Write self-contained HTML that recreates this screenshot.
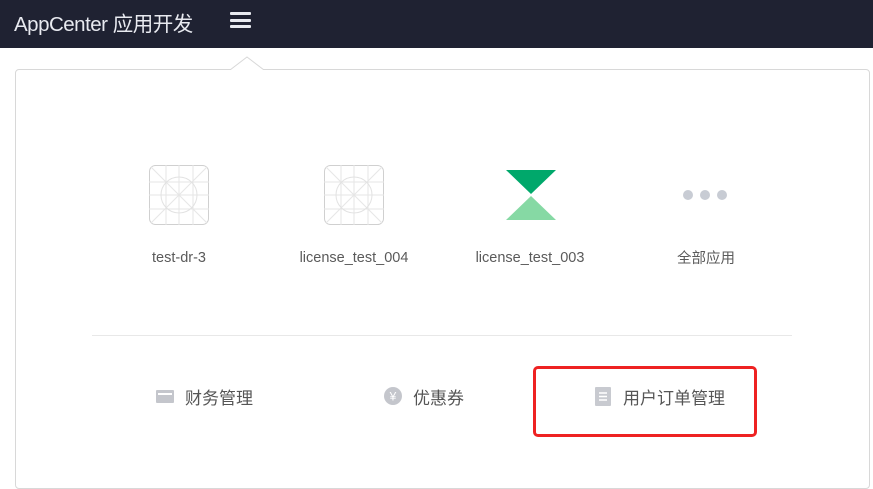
<!DOCTYPE html>
<html><head><meta charset="utf-8"><style>
*{margin:0;padding:0;box-sizing:border-box}
body{width:873px;height:480px;overflow:hidden;background:#fff;font-family:"Liberation Sans","Noto Sans CJK SC",sans-serif;position:relative}
.hd{position:absolute;left:0;top:0;width:873px;height:48px;background:#1f2232}
.hd .t{position:absolute;left:14px;top:7px;color:#e8eaf0;font-size:20.5px;letter-spacing:-0.5px}
.hd .m{position:absolute;left:230px;top:12px;width:21px}
.hd .m i{display:block;height:3px;background:#e8eaf0;margin-bottom:3.5px;border-radius:1px}
.pn{position:absolute;left:15px;top:69px;width:855px;height:420px;border:1px solid #d8d8d8;border-radius:4px;background:#fff}
.lb{position:absolute;top:250px;width:180px;text-align:center;font-size:14.5px;color:#5a5a5a}
.dv{position:absolute;left:92px;top:335px;width:700px;height:1px;background:#e8e8e8}
.bi{position:absolute;top:384px;font-size:17px;color:#555}
.rb{position:absolute;left:533px;top:366px;width:224px;height:71px;border:3px solid #ee2222;border-radius:5px}
</style></head><body>
<div class="hd"><div class="t">AppCenter 应用开发</div><div class="m"><i></i><i></i><i></i></div></div>
<div class="pn"></div>
<svg style="position:absolute;left:230px;top:56px" width="34" height="15"><path d="M0 14 L17 1 L34 14" fill="#fff" stroke="#d8d8d8"/><rect x="0" y="14" width="34" height="2" fill="#fff"/></svg>
<svg style="position:absolute;left:149px;top:165px" width="60" height="60"><g fill="none" stroke-width="1"><rect x="0.5" y="0.5" width="59" height="59" rx="6" stroke="#d0d0d0"/><path d="M0 17H60M0 30H60M0 44H60M17 0V60M30 0V60M44 0V60M2 2L58 58M58 2L2 58" stroke="#e6e6e6"/><circle cx="30" cy="30" r="18" stroke="#e2e2e2"/></g></svg>
<svg style="position:absolute;left:324px;top:165px" width="60" height="60"><g fill="none" stroke-width="1"><rect x="0.5" y="0.5" width="59" height="59" rx="6" stroke="#d0d0d0"/><path d="M0 17H60M0 30H60M0 44H60M17 0V60M30 0V60M44 0V60M2 2L58 58M58 2L2 58" stroke="#e6e6e6"/><circle cx="30" cy="30" r="18" stroke="#e2e2e2"/></g></svg>
<svg style="position:absolute;left:506px;top:170px" width="50" height="51"><path d="M0 0H50L25 24Z" fill="#00a86b"/><path d="M25 26L50 50H0Z" fill="#86d9a4"/></svg>
<svg style="position:absolute;left:682px;top:189px" width="48" height="12"><circle cx="6" cy="6" r="5" fill="#c8ccd4"/><circle cx="23" cy="6" r="5" fill="#c8ccd4"/><circle cx="40" cy="6" r="5" fill="#c8ccd4"/></svg>
<div class="lb" style="left:89px">test-dr-3</div>
<div class="lb" style="left:264px">license_test_004</div>
<div class="lb" style="left:440px">license_test_003</div>
<div class="lb" style="left:616px;top:247px">全部应用</div>
<div class="dv"></div>
<svg style="position:absolute;left:156px;top:390px" width="18" height="13"><rect width="18" height="13" rx="1" fill="#c4c6cc"/><rect x="2" y="3" width="14" height="2" fill="#fff"/></svg>
<div class="bi" style="left:185px">财务管理</div>
<svg style="position:absolute;left:384px;top:387px" width="18" height="18"><circle cx="9" cy="9" r="9" fill="#c4c6cc"/><text x="9" y="13.5" font-size="12" text-anchor="middle" fill="#fff" font-family="Liberation Sans">¥</text></svg>
<div class="bi" style="left:413px">优惠券</div>
<svg style="position:absolute;left:595px;top:387px" width="16" height="19"><rect width="16" height="19" rx="1" fill="#c8cad0"/><path d="M4 6H12M4 9.5H12M4 13H12" stroke="#fff" stroke-width="1.5"/></svg>
<div class="bi" style="left:623px">用户订单管理</div>
<div class="rb"></div>
</body></html>
